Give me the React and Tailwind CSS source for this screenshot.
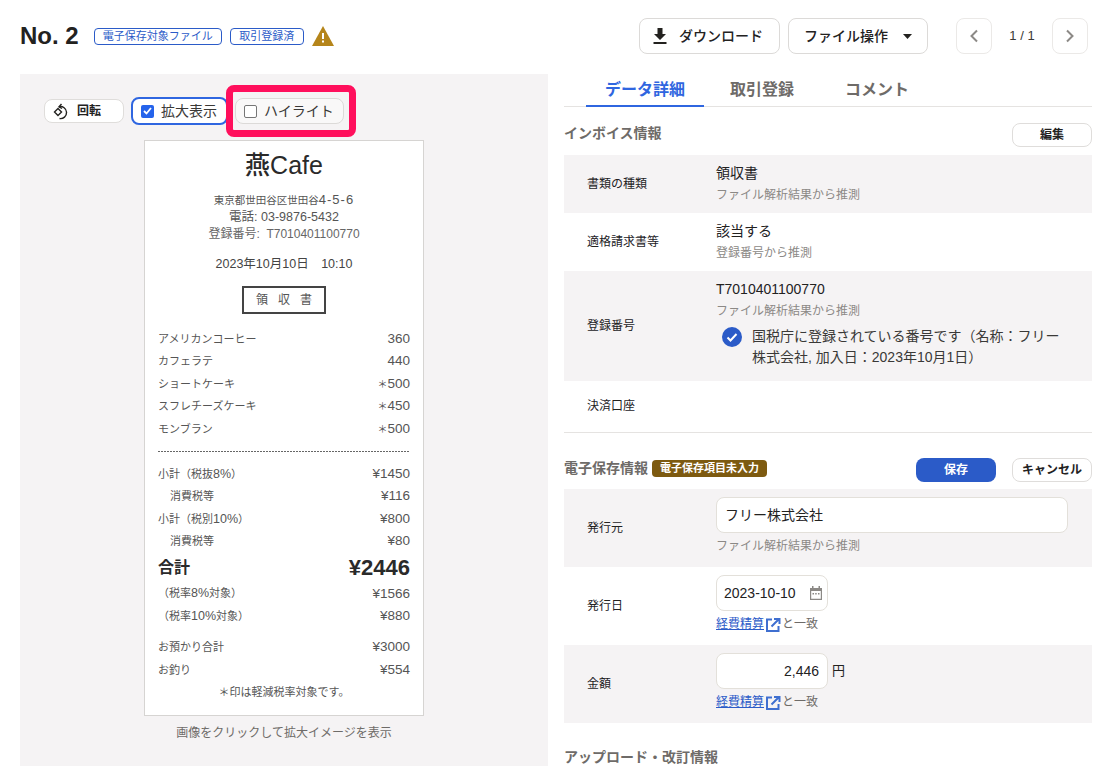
import React from "react";

const F = { fontFamily: '"Liberation Sans", "Noto Sans CJK JP", sans-serif' };

function N({ children }) {
  return <span className="text-[12.5px]">{children}</span>;
}

function R({ l, r, star, indent }) {
  return (
    <div className="flex justify-between items-center h-[22.4px] text-[11px] text-[#555]">
      <span className={indent ? "pl-[12px]" : ""}>{l}</span>
      <span className="text-[13.5px]">
        {star && <span className="text-[10px]">＊</span>}
        {r}
      </span>
    </div>
  );
}

function ExtLink() {
  return (
    <div className="flex items-center text-[12px] leading-[18px] text-[#6e6b68] mt-[3px]">
      <span className="text-[#2b5bc8] underline">経費精算</span>
      <svg width="16" height="16" viewBox="0 0 16 16" className="mx-[1px] mt-[3px]" fill="none" stroke="#3f6fd0" strokeWidth="2">
        <path d="M7 2.500H2v11.500h11.500V9" />
        <path d="M6.500 9.500L13.500 2.500M9 2h5.500v5" />
      </svg>
      <span>と一致</span>
    </div>
  );
}

function Row({ label, h, gray, children }) {
  return (
    <div className={`flex items-center ${h} ${gray ? "bg-[#f5f3f4]" : ""}`}>
      <div className="w-[152px] shrink-0 pl-[23px] text-[12px] text-[#23221f]">{label}</div>
      <div className="flex-1 min-w-0 pr-[24px]">{children}</div>
    </div>
  );
}

function Value({ v, note }) {
  return (
    <div>
      <div className="text-[14px] leading-[18px] text-[#23221f]">{v}</div>
      <div className="text-[12px] leading-[18px] mt-[4px] text-[#8c8986]">{note}</div>
    </div>
  );
}

export default function App() {
  return (
    <div style={F} className="w-[1113px] h-[768px] overflow-hidden bg-white text-[#23221f]">
      <header className="flex items-center h-[36px] mt-[18px] pl-[20px] pr-[25px]">
        <div className="text-[24px] font-bold leading-none mr-[15px]">No. 2</div>
        <span className="h-[17px] w-[128px] flex items-center justify-center border border-[#2b5bc8] rounded-[4px] text-[11px] text-[#2b5bc8]">電子保存対象ファイル</span>
        <span className="h-[17px] w-[74px] ml-[8px] flex items-center justify-center border border-[#2b5bc8] rounded-[4px] text-[11px] text-[#2b5bc8]">取引登録済</span>
        <svg width="22" height="20" viewBox="0 0 22 20" className="ml-[8px]">
          <path d="M11 0L22 20H0Z" fill="#b5851a" />
          <rect x="10" y="7" width="2" height="6" fill="#fff" />
          <rect x="10" y="14.500" width="2" height="2" fill="#fff" />
        </svg>
        <div className="flex-1" />
        <button className="h-[36px] w-[141px] flex items-center justify-center gap-[12px] pr-[3px] border border-[#dcdad8] rounded-[8px] text-[14px] font-medium bg-white">
          <svg width="14" height="16" viewBox="0 0 14 16" fill="#23221f">
            <path d="M4.500 0h5v6H13L7 12 1 6h3.500z" />
            <rect x="0.500" y="14" width="13" height="2" />
          </svg>
          ダウンロード
        </button>
        <button className="h-[36px] w-[140px] ml-[8px] flex items-center justify-center gap-[15px] border border-[#dcdad8] rounded-[8px] text-[14px] font-medium bg-white">
          ファイル操作
          <svg width="9" height="5" viewBox="0 0 9 5" fill="#23221f"><path d="M0 0h9L4.500 5z" /></svg>
        </button>
        <button className="h-[36px] w-[36px] ml-[28px] flex items-center justify-center border border-[#ebe9e7] rounded-[8px]">
          <svg width="10" height="14" viewBox="0 0 10 14" fill="none" stroke="#8c8986" strokeWidth="2"><path d="M8 1.500L2.500 7 8 12.500" /></svg>
        </button>
        <div className="w-[60px] text-center text-[13px] text-[#3a3937]">1 / 1</div>
        <button className="h-[36px] w-[36px] flex items-center justify-center border border-[#ebe9e7] rounded-[8px]">
          <svg width="10" height="14" viewBox="0 0 10 14" fill="none" stroke="#8c8986" strokeWidth="2"><path d="M2 1.500L7.500 7 2 12.500" /></svg>
        </button>
      </header>

      <div className="flex items-start mt-[20px] pl-[20px] gap-[16px]">
        <section className="w-[528px] h-[692px] bg-[#f5f3f4] flex flex-col">
          <div className="flex items-center h-[66px] pt-[8px] pl-[24px]">
            <button className="w-[80px] h-[24px] flex items-center pl-[8px] gap-[8px] bg-white border border-[#dfdddb] rounded-[8px] text-[12px] font-bold">
              <svg width="16" height="17" viewBox="0 0 16 17" fill="none" stroke="#23221f" strokeWidth="1.400">
                <path d="M5 5.500L1.500 9 5 12.500 8.500 9z" />
                <path d="M6 3.800A6 6 0 1 1 6.500 15.500" />
                <path d="M8.500 1L6 3.800l3 1.700" />
              </svg>
              回転
            </button>
            <label className="w-[97px] h-[28px] ml-[7px] flex items-center pl-[8px] gap-[7px] bg-white border-2 border-[#2f66e0] rounded-[8px] text-[14px] text-[#3a3937]">
              <span className="w-[13px] h-[13px] bg-[#2563eb] rounded-[2px] flex items-center justify-center">
                <svg width="9" height="8" viewBox="0 0 9 8" fill="none" stroke="#fff" strokeWidth="1.800"><path d="M1 4l2.500 2.500L8 1" /></svg>
              </span>
              拡大表示
            </label>
            <div className="ml-[-2px] w-[130px] h-[52px] border-[7px] border-[#ff0f5c] rounded-[8px] flex items-center pl-[2px]">
              <label className="w-[109px] h-[26px] flex items-center pl-[8px] gap-[7px] bg-[#f9f8f8] border border-[#dcdad8] rounded-[8px] text-[14px] text-[#3a3937]">
                <span className="w-[13px] h-[13px] bg-white border border-[#767676] rounded-[2px]" />
                ハイライト
              </label>
            </div>
          </div>

          <div className="mx-auto w-[280px] h-[576px] bg-white border border-[#d6d4d2] px-[13px] flex flex-col">
            <div className="text-center text-[25px] leading-[30px] mt-[9px] font-medium text-[#2a2a2a]">燕Cafe</div>
            <div className="text-center leading-[17px] mt-[10px] text-[#555]">
              <div><span className="text-[10.5px]">東京都世田谷区世田谷</span><span className="text-[13px] tracking-[1px]">4-5-6</span></div>
              <div className="text-[12.5px]">電話: 03-9876-5432</div>
              <div className="text-[12px] text-[#666]">登録番号:&nbsp; T7010401100770</div>
            </div>
            <div className="text-center text-[12.5px] leading-[17px] mt-[13px] text-[#444]">2023年10月10日　10:10</div>
            <div className="mx-auto mt-[13px] w-[84px] h-[28px] border-2 border-[#444] flex items-center justify-center text-[12px] text-[#555] tracking-[10px] pl-[10px]">領収書</div>
            <div className="mt-[14px]">
              <R l="アメリカンコーヒー" r="360" />
              <R l="カフェラテ" r="440" />
              <R l="ショートケーキ" r="500" star />
              <R l="スフレチーズケーキ" r="450" star />
              <R l="モンブラン" r="500" star />
            </div>
            <div className="h-px bg-[repeating-linear-gradient(90deg,#666_0,#666_2px,transparent_2px,transparent_3px)] mt-[11px] mb-[11px]" />
            <R l={<>小計（税抜<N>8%</N>）</>} r="¥1450" />
            <R l="消費税等" r="¥116" indent />
            <R l={<>小計（税別<N>10%</N>）</>} r="¥800" />
            <R l="消費税等" r="¥80" indent />
            <div className="flex justify-between items-center h-[30px] font-bold text-[#2a2a2a]">
              <span className="text-[16px]">合計</span>
              <span className="text-[22px]">¥2446</span>
            </div>
            <R l={<>（税率<N>8%</N>対象）</>} r="¥1566" />
            <R l={<>（税率<N>10%</N>対象）</>} r="¥880" />
            <div className="h-[9px]" />
            <R l="お預かり合計" r="¥3000" />
            <R l="お釣り" r="¥554" />
            <div className="text-center text-[11px] leading-[22px] text-[#555]">＊印は軽減税率対象です。</div>
          </div>
          <div className="text-center text-[12px] leading-[18px] mt-[8px] text-[#6e6b68]">画像をクリックして拡大イメージを表示</div>
        </section>

        <section className="w-[528px] shrink-0">
          <div className="flex h-[33px] border-b border-[#e5e3e1] pl-[22px] text-[16px] font-bold">
            <div className="w-[118px] h-[33px] border-b-2 border-[#2f66e0] text-[#2f66e0] flex items-center justify-center">データ詳細</div>
            <div className="w-[26px]" />
            <div className="flex items-center text-[#6e6b68]">取引登録</div>
            <div className="w-[51px]" />
            <div className="flex items-center text-[#6e6b68]">コメント</div>
          </div>
          <div className="flex items-center justify-between h-[48px] pt-[8px]">
            <span className="text-[14px] font-bold text-[#6e6b68] -mt-[4px]">インボイス情報</span>
            <button className="w-[80px] h-[24px] border border-[#dfdddb] rounded-[8px] text-[12px] font-bold bg-white">編集</button>
          </div>
          <Row label="書類の種類" h="h-[58px]" gray><Value v="領収書" note="ファイル解析結果から推測" /></Row>
          <Row label="適格請求書等" h="h-[58px]"><Value v="該当する" note="登録番号から推測" /></Row>
          <Row label="登録番号" h="h-[110px]" gray>
            <div className="pb-[4px]">
              <Value v="T7010401100770" note="ファイル解析結果から推測" />
              <div className="flex items-start mt-[6px] pl-[6px] gap-[10px] text-[14px] leading-[21px] text-[#3a3937]">
                <svg width="20" height="20" viewBox="0 0 20 20" className="shrink-0 mt-[1px]">
                  <circle cx="10" cy="10" r="10" fill="#2b5bc8" />
                  <path d="M5.500 10.500L8.500 13.500 14.500 7" fill="none" stroke="#fff" strokeWidth="2" />
                </svg>
                <div>国税庁に登録されている番号です（名称：フリー株式会社, 加入日：2023年10月1日）</div>
              </div>
            </div>
          </Row>
          <div className="border-b border-[#e5e3e1]">
            <Row label="決済口座" h="h-[51px] pb-[2px]" />
          </div>
          <div className="flex items-center h-[56px] pt-[14px]">
            <span className="text-[14px] font-bold text-[#6e6b68]">電子保存情報</span>
            <span className="ml-[4px] h-[17px] w-[115px] bg-[#7d5a10] rounded-[4px] text-white text-[11px] font-bold flex items-center justify-center">電子保存項目未入力</span>
            <div className="flex-1" />
            <button className="w-[80px] h-[24px] mt-[4px] bg-[#2b5bc8] rounded-[8px] text-white text-[12px] font-bold">保存</button>
            <button className="w-[80px] h-[24px] mt-[4px] ml-[16px] border border-[#dfdddb] rounded-[8px] text-[12px] font-bold bg-white">キャンセル</button>
          </div>
          <Row label="発行元" h="h-[78px]" gray>
            <div className="pb-[4px]">
              <div className="w-[352px] h-[36px] bg-white border border-[#e3e0da] rounded-[8px] flex items-center px-[8px] text-[14px]">フリー株式会社</div>
              <div className="text-[12px] leading-[18px] mt-[4px] text-[#8c8986]">ファイル解析結果から推測</div>
            </div>
          </Row>
          <Row label="発行日" h="h-[78px]">
            <div className="pb-[4px]">
              <div className="w-[112px] h-[36px] bg-white border border-[#e3e0da] rounded-[8px] flex items-center justify-between pl-[7px] pr-[5px] text-[14px]">
                2023-10-10
                <svg width="12" height="14" viewBox="0 0 12 14" fill="#8c8986">
                  <path d="M2 0h1.500v2h5V0H10v2h2v12H0V2h2zM1.200 5v7.800h9.600V5z" />
                  <rect x="2.500" y="7" width="1.500" height="1.500" />
                  <rect x="5.200" y="7" width="1.500" height="1.500" />
                  <rect x="8" y="7" width="1.500" height="1.500" />
                </svg>
              </div>
              <ExtLink />
            </div>
          </Row>
          <Row label="金額" h="h-[78px]" gray>
            <div className="pb-[4px]">
              <div className="flex items-center gap-[4px] text-[14px]">
                <div className="w-[112px] h-[36px] bg-white border border-[#e3e0da] rounded-[8px] flex items-center justify-end pr-[8px]">2,446</div>
                <span className="text-[13px]">円</span>
              </div>
              <ExtLink />
            </div>
          </Row>
          <div className="mt-[24px] text-[14px] font-bold leading-[20px] text-[#6e6b68]">アップロード・改訂情報</div>
        </section>
      </div>
    </div>
  );
}
